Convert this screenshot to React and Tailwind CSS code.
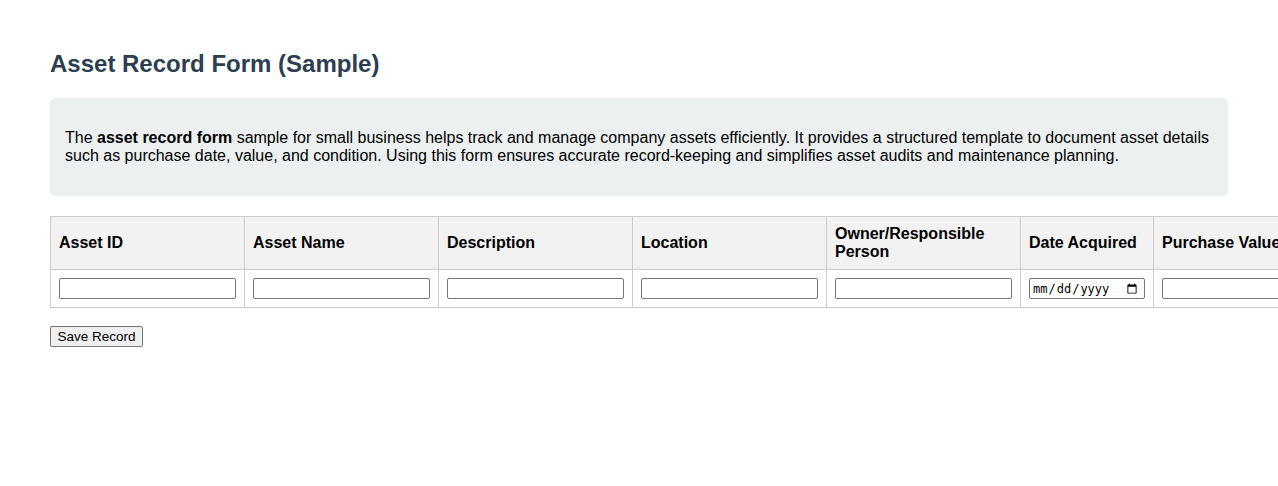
import React from "react";

const columns = [
    { label: "Asset ID", width: "w-[194px]", type: "text" },
    { label: "Asset Name", width: "w-[194px]", type: "text" },
    { label: "Description", width: "w-[194px]", type: "text" },
    { label: "Location", width: "w-[194px]", type: "text" },
    { label: "Owner/Responsible Person", width: "w-[194px]", type: "text" },
    { label: "Date Acquired", width: "w-[133px]", type: "date" },
    { label: "Purchase Value", width: "w-[194px]", type: "text" },
    { label: "Condition", width: "w-[194px]", type: "text" },
];

export default function App() {
    return (
        <div className="min-h-[486px] overflow-hidden bg-white font-['Liberation_Sans',Arial,sans-serif] text-black">
            <div className="px-[50px] pt-[50px]">
                <h2 className="mb-5 text-[24px] font-bold leading-[27.6px] text-[#2c3e50]">
                    Asset Record Form (Sample)
                </h2>

                <div className="rounded-[5px] bg-[#ecf0f1] p-[15px]">
                    <p className="my-4 text-[16px] leading-[18.4px]">
                        The <strong>asset record form</strong> sample for small business helps track and manage company assets efficiently. It provides a structured template to document asset details such as purchase date, value, and condition. Using this form ensures accurate record-keeping and simplifies asset audits and maintenance planning.
                    </p>
                </div>

                <table className="mt-5 w-[1492px] table-fixed border-collapse text-[16px] leading-[18px]">
                    <thead>
                        <tr>
                            {columns.map((col) => (
                                <th
                                    key={col.label}
                                    className={`${col.width} border border-[#cccccc] bg-[#f2f2f2] p-2 text-left align-middle font-bold`}
                                >
                                    {col.label}
                                </th>
                            ))}
                        </tr>
                    </thead>
                    <tbody>
                        <tr>
                            {columns.map((col) => (
                                <td key={col.label} className="border border-[#cccccc] p-2 align-middle">
                                    <input
                                        type={col.type}
                                        className={
                                            col.type === "date"
                                                ? "block h-[21px] w-full rounded-[2px] border border-[#767676] bg-white pl-[2px] pr-[4px] font-['DejaVu_Sans_Mono',monospace] text-[12px] text-black"
                                                : "block h-[21px] w-full rounded-[2px] border border-[#767676] bg-white px-[2px] text-[13px]"
                                        }
                                    />
                                </td>
                            ))}
                        </tr>
                    </tbody>
                </table>

                <button className="mt-[18px] h-[21px] rounded-[2px] border border-[#767676] bg-[#efefef] px-[6.5px] text-[13.5px] leading-[15px] text-black">
                    Save Record
                </button>
            </div>
        </div>
    );
}
